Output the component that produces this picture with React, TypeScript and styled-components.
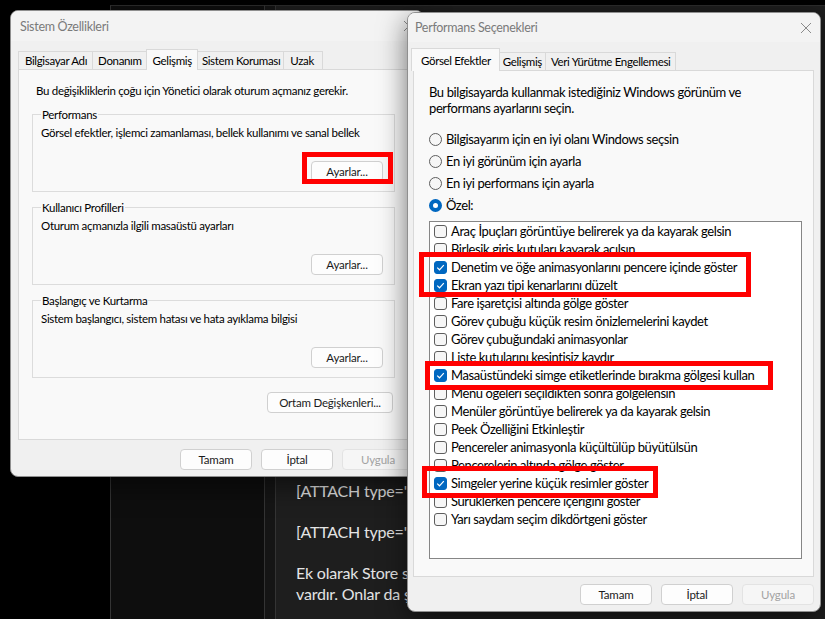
import React from 'react';
import styled, { createGlobalStyle } from 'styled-components';

const FONT = `Lato, "Noto Sans", "DejaVu Sans", sans-serif`;
const UI = 11.5;
const BIG = 13;

const Global = createGlobalStyle`
  html, body { margin: 0; padding: 0; background: #000; overflow: hidden; }
  body { width: 825px; height: 619px; font-family: ${FONT}; }
  * { box-sizing: border-box; }
`;

const Screen = styled.div`
  position: relative;
  width: 825px;
  height: 619px;
  overflow: hidden;
  background: #000;
  display: flex;
  padding-top: 5px;
`;

const BlackGap = styled.div`
  width: 110px;
  flex-shrink: 0;
`;

const Pane = styled.div<{ $w: number; $bg: string }>`
  width: ${(p) => p.$w}px;
  flex-shrink: 0;
  background: ${(p) => p.$bg};
  border-left: 1px solid #343434;
  border-top: 1px solid #2c2c2c;
`;

const Editor = styled.div`
  flex: 1;
  background: #1e1e1e;
  border-left: 1px solid #343434;
  border-top: 1px solid #2c2c2c;
  padding: 474px 0 0 20px;
  color: #e4e4e4;
  font: 16px/21px ${FONT};
  letter-spacing: -0.2px;
  white-space: nowrap;
`;

const EditorPara = styled.p`
  margin: 0 0 20px;
`;

const Win = styled.section<{ $x: number; $y: number; $w: number; $h: number }>`
  position: absolute;
  left: ${(p) => p.$x}px;
  top: ${(p) => p.$y}px;
  width: ${(p) => p.$w}px;
  height: ${(p) => p.$h}px;
  background: #f0f0f0;
  border: 1px solid #8f8f8f;
  border-radius: 8px;
  box-shadow: 0 8px 28px rgba(0, 0, 0, 0.55);
  display: flex;
  flex-direction: column;
  overflow: hidden;
  font-family: ${FONT};
  font-size: ${UI}px;
  letter-spacing: -0.3px;
  color: #000;
`;

const TitleBar = styled.header<{ $h: number; $pl: number }>`
  height: ${(p) => p.$h}px;
  flex-shrink: 0;
  display: flex;
  align-items: center;
  justify-content: space-between;
  padding: 0 8px 0 ${(p) => p.$pl}px;
  background: #f3f3f3;
  color: #7a7a7a;
  font-size: 12.5px;
`;

const CloseBtn = styled.span`
  width: 12px;
  height: 12px;
  display: flex;
`;

const Body = styled.div<{ $pad: string }>`
  flex: 1;
  display: flex;
  flex-direction: column;
  padding: ${(p) => p.$pad};
`;

const TabStrip = styled.div<{ $h: number }>`
  height: ${(p) => p.$h}px;
  display: flex;
  align-items: flex-end;
  position: relative;
  z-index: 1;
  flex-shrink: 0;
`;

const Tab = styled.div<{ $active?: boolean; $h: number; $pl: number; $pr: number }>`
  height: ${(p) => p.$h}px;
  padding: 0 ${(p) => p.$pr}px 0 ${(p) => p.$pl}px;
  display: flex;
  align-items: center;
  border: 1px solid #d9d9d9;
  border-bottom: none;
  margin-left: -1px;
  background: ${(p) => (p.$active ? '#f9f9f9' : '#f0f0f0')};
  margin-bottom: ${(p) => (p.$active ? '-1px' : '0')};
  color: #000;
  white-space: nowrap;
  letter-spacing: -0.35px;
  &:first-child {
    margin-left: ${(p) => (p.$active ? '-2px' : '0')};
  }
`;

const Panel = styled.div<{ $h: number; $pad: string }>`
  height: ${(p) => p.$h}px;
  flex-shrink: 0;
  background: #f9f9f9;
  border: 1px solid #d9d9d9;
  padding: ${(p) => p.$pad};
  display: flex;
  flex-direction: column;
`;

const Intro = styled.p<{ $big?: boolean; $ml: number }>`
  margin: 0 0 0 ${(p) => p.$ml}px;
  font-size: ${(p) => (p.$big ? BIG : UI)}px;
  letter-spacing: ${(p) => (p.$big ? -0.4 : -0.3)}px;
  line-height: 16px;
  white-space: nowrap;
`;

const Group = styled.div`
  height: 78px;
  border: 1px solid #dcdcdc;
  margin-top: 15px;
  padding: 0 11px 9px 8px;
  display: flex;
  flex-direction: column;
`;

const GroupLabel = styled.span`
  align-self: flex-start;
  margin-top: -8px;
  padding: 0 1px;
  line-height: 16px;
  background: #f9f9f9;
`;

const GroupText = styled.span`
  margin-top: 2px;
  line-height: 16px;
  white-space: nowrap;
`;

const Btn = styled.button<{ $w?: number }>`
  width: ${(p) => p.$w ?? 72}px;
  height: 21px;
  padding: 0;
  border: 1px solid #d0d0d0;
  border-radius: 4px;
  background: #fdfdfd;
  color: #1b1b1b;
  font-family: ${FONT};
  font-size: ${UI}px;
  letter-spacing: -0.2px;
  line-height: 19px;
  &:disabled {
    background: #f6f6f6;
    border-color: #e3e3e3;
    color: #a3a3a3;
  }
`;

const GroupBtn = styled(Btn)`
  margin-top: auto;
  align-self: flex-end;
`;

const EnvBtn = styled(Btn)`
  margin-top: 14px;
  margin-right: 2px;
  align-self: flex-end;
`;

const Footer = styled.div<{ $mt: number }>`
  display: flex;
  justify-content: flex-end;
  gap: 9px;
  margin-top: ${(p) => p.$mt}px;
`;

const RadioList = styled.div`
  margin-top: 12px;
  display: flex;
  flex-direction: column;
`;

const RadioRow = styled.label`
  height: 22px;
  display: flex;
  align-items: center;
  gap: 4px;
  font-size: ${BIG}px;
  letter-spacing: -0.4px;
  white-space: nowrap;
`;

const RadioDot = styled.span<{ $on?: boolean }>`
  width: 13px;
  height: 13px;
  border-radius: 50%;
  flex-shrink: 0;
  border: ${(p) => (p.$on ? '4px solid #0067c0' : '1px solid #5d5d5d')};
  background: ${(p) => (p.$on ? '#fff' : '#f6f6f6')};
`;

const ListBox = styled.div`
  margin-top: 5px;
  height: 338px;
  width: 373px;
  background: #fff;
  border: 1px solid #868686;
  padding: 0 0 0 4px;
  display: flex;
  flex-direction: column;
`;

const CheckRow = styled.div`
  height: 18px;
  flex-shrink: 0;
  display: flex;
  align-items: center;
  gap: 4px;
  font-size: ${BIG}px;
  letter-spacing: -0.4px;
  white-space: nowrap;
`;

const CheckBox = styled.span<{ $on?: boolean }>`
  width: 13px;
  height: 13px;
  flex-shrink: 0;
  border-radius: 3px;
  border: 1px solid ${(p) => (p.$on ? '#0067c0' : '#5d5d5d')};
  background: ${(p) => (p.$on ? '#0067c0' : '#f6f6f6')};
  display: flex;
  align-items: center;
  justify-content: center;
`;

const Highlight = styled.div<{ $x: number; $y: number; $w: number; $h: number }>`
  position: absolute;
  left: ${(p) => p.$x}px;
  top: ${(p) => p.$y}px;
  width: ${(p) => p.$w}px;
  height: ${(p) => p.$h}px;
  border: 5px solid #ff0000;
  pointer-events: none;
  z-index: 10;
`;

const CloseIcon = () => (
  <CloseBtn>
    <svg width="12" height="12" viewBox="0 0 12 12">
      <path d="M1 1 L11 11 M11 1 L1 11" stroke="#8a8a8a" strokeWidth="1" fill="none" />
    </svg>
  </CloseBtn>
);

const Check = ({ on }: { on: boolean }) => (
  <CheckBox $on={on}>
    {on && (
      <svg width="9" height="9" viewBox="0 0 9 9">
        <path d="M1.2 4.6 L3.5 6.8 L7.8 2.2" stroke="#fff" strokeWidth="1.2" fill="none" />
      </svg>
    )}
  </CheckBox>
);

const effects: [string, boolean][] = [
  ['Araç İpuçları görüntüye belirerek ya da kayarak gelsin', false],
  ['Birleşik giriş kutuları kayarak açılsın', false],
  ['Denetim ve öğe animasyonlarını pencere içinde göster', true],
  ['Ekran yazı tipi kenarlarını düzelt', true],
  ['Fare işaretçisi altında gölge göster', false],
  ['Görev çubuğu küçük resim önizlemelerini kaydet', false],
  ['Görev çubuğundaki animasyonlar', false],
  ['Liste kutularını kesintisiz kaydır', false],
  ['Masaüstündeki simge etiketlerinde bırakma gölgesi kullan', true],
  ['Menü öğeleri seçildikten sonra gölgelensin', false],
  ['Menüler görüntüye belirerek ya da kayarak gelsin', false],
  ['Peek Özelliğini Etkinleştir', false],
  ['Pencereler animasyonla küçültülüp büyütülsün', false],
  ['Pencerelerin altında gölge göster', false],
  ['Simgeler yerine küçük resimler göster', true],
  ['Sürüklerken pencere içeriğini göster', false],
  ['Yarı saydam seçim dikdörtgeni göster', false],
];

const radios: [string, boolean][] = [
  ['Bilgisayarım için en iyi olanı Windows seçsin', false],
  ['En iyi görünüm için ayarla', false],
  ['En iyi performans için ayarla', false],
  ['Özel:', true],
];

const groups = [
  ['Performans', 'Görsel efektler, işlemci zamanlaması, bellek kullanımı ve sanal bellek'],
  ['Kullanıcı Profilleri', 'Oturum açmanızla ilgili masaüstü ayarları'],
  ['Başlangıç ve Kurtarma', 'Sistem başlangıcı, sistem hatası ve hata ayıklama bilgisi'],
];

export default function App() {
  return (
    <>
      <Global />
      <Screen>
        <BlackGap />
        <Pane $w={154} $bg="#0e0e0e" />
        <Pane $w={11} $bg="#151515" />
        <Editor>
          <EditorPara>[ATTACH type="full" alt="1"]</EditorPara>
          <EditorPara>[ATTACH type="full" alt="2"]</EditorPara>
          <EditorPara>
            Ek olarak Store sürümü de mevcuttur,
            <br />
            vardır. Onlar da şu şekilde
          </EditorPara>
        </Editor>

        <Win $x={10} $y={10} $w={414} $h={467}>
          <TitleBar $h={30} $pl={9}>
            <span>Sistem Özellikleri</span>
            <CloseIcon />
          </TitleBar>
          <Body $pad="8px 9px 0 7px">
            <TabStrip $h={20}>
              <Tab $h={18} $pl={6} $pr={5}>Bilgisayar Adı</Tab>
              <Tab $h={18} $pl={5} $pr={4}>Donanım</Tab>
              <Tab $active $h={21} $pl={6} $pr={5}>Gelişmiş</Tab>
              <Tab $h={18} $pl={4} $pr={3}>Sistem Koruması</Tab>
              <Tab $h={18} $pl={6} $pr={8}>Uzak</Tab>
            </TabStrip>
            <Panel $h={371} $pad="13px 18px 0 13px">
              <Intro $ml={4}>
                Bu değişikliklerin çoğu için Yönetici olarak oturum açmanız gerekir.
              </Intro>
              {groups.map(([label, text]) => (
                <Group key={label}>
                  <GroupLabel>{label}</GroupLabel>
                  <GroupText>{text}</GroupText>
                  <GroupBtn>Ayarlar...</GroupBtn>
                </Group>
              ))}
              <EnvBtn $w={126}>Ortam Değişkenleri...</EnvBtn>
            </Panel>
            <Footer $mt={9}>
              <Btn>Tamam</Btn>
              <Btn>İptal</Btn>
              <Btn disabled>Uygula</Btn>
            </Footer>
          </Body>
        </Win>

        <Win $x={407} $y={12} $w={414} $h={600}>
          <TitleBar $h={29} $pl={7}>
            <span>Performans Seçenekleri</span>
            <CloseIcon />
          </TitleBar>
          <Body $pad="6px 6px 0 5px">
            <TabStrip $h={22}>
              <Tab $active $h={23} $pl={9} $pr={8}>Görsel Efektler</Tab>
              <Tab $h={18} $pl={3} $pr={3}>Gelişmiş</Tab>
              <Tab $h={18} $pl={5} $pr={5}>Veri Yürütme Engellemesi</Tab>
            </TabStrip>
            <Panel $h={507} $pad="13px 12px 0 15px">
              <Intro $big $ml={0}>
                Bu bilgisayarda kullanmak istediğiniz Windows görünüm ve
                <br />
                performans ayarlarını seçin.
              </Intro>
              <RadioList>
                {radios.map(([t, on]) => (
                  <RadioRow key={t}>
                    <RadioDot $on={on} />
                    {t}
                  </RadioRow>
                ))}
              </RadioList>
              <ListBox>
                {effects.map(([t, on]) => (
                  <CheckRow key={t}>
                    <Check on={on} />
                    {t}
                  </CheckRow>
                ))}
              </ListBox>
            </Panel>
            <Footer $mt={7}>
              <Btn>Tamam</Btn>
              <Btn>İptal</Btn>
              <Btn disabled>Uygula</Btn>
            </Footer>
          </Body>
        </Win>

        <Highlight $x={302} $y={152} $w={91} $h={32} />
        <Highlight $x={419} $y={252} $w={332} $h={45} />
        <Highlight $x={425} $y={361} $w={348} $h={29} />
        <Highlight $x={422} $y={466} $w={236} $h={32} />
      </Screen>
    </>
  );
}
